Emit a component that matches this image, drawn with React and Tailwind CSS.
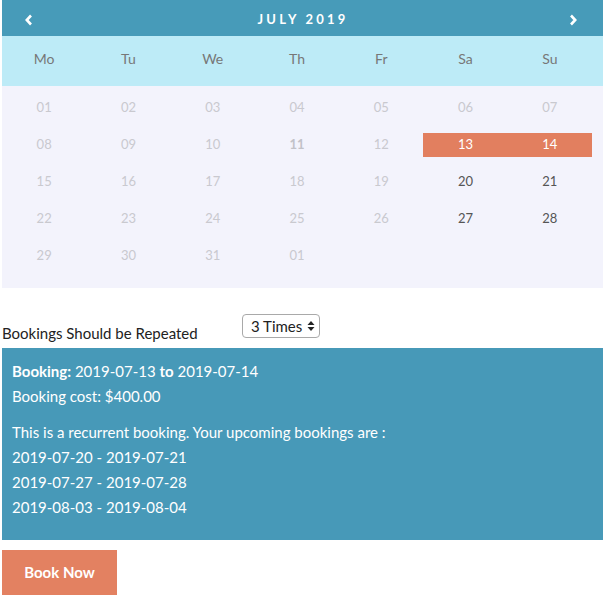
import React from "react";

const weekdays = ["Mo", "Tu", "We", "Th", "Fr", "Sa", "Su"];

// each row: [label, kind]
const rows = [
  [["01"], ["02"], ["03"], ["04"], ["05"], ["06"], ["07"]],
  [["08"], ["09"], ["10"], ["11", "today"], ["12"], ["13", "sel"], ["14", "sel"]],
  [["15"], ["16"], ["17"], ["18"], ["19"], ["20", "on"], ["21", "on"]],
  [["22"], ["23"], ["24"], ["25"], ["26"], ["27", "on"], ["28", "on"]],
  [["29"], ["30"], ["31"], ["01"], [""], [""], [""]],
];

const upcoming = [
  "2019-07-20 - 2019-07-21",
  "2019-07-27 - 2019-07-28",
  "2019-08-03 - 2019-08-04",
];

function DayCell({ label, kind }) {
  let cls = "text-[#c9c9cf]";
  if (kind === "today") cls = "text-[#c2c2c8] font-bold";
  if (kind === "on") cls = "text-[#555]";
  if (kind === "sel") cls = "text-white bg-[#e27f5f]";
  return (
    <div className={"h-[24px] flex items-center justify-center text-[13px] " + cls}>
      {label}
    </div>
  );
}

export default function App() {
  return (
    <div className="w-[605px] h-[598px] bg-white" style={{ fontFamily: "Lato, 'Open Sans', sans-serif" }}>
      <div className="pt-0 pl-[2px] pr-[2px]">
        {/* calendar */}
        <div>
          <div className="h-[36px] bg-[#479bb9] flex items-center justify-between pl-[22px] pr-[25px] pt-[3px] text-white">
            <svg width="10" height="12" viewBox="0 0 10 12">
              <path d="M7 1.5 L2.8 6 L7 10.5" stroke="white" strokeWidth="2.6" fill="none" />
            </svg>
            <span className="text-[13px] font-bold tracking-[0.25em] pl-[4px]">JULY 2019</span>
            <svg width="10" height="12" viewBox="0 0 10 12">
              <path d="M3 1.5 L7.2 6 L3 10.5" stroke="white" strokeWidth="2.6" fill="none" />
            </svg>
          </div>
          <div className="h-[50px] bg-[#bdebf7] grid grid-cols-7 w-full pr-[11px] items-center">
            {weekdays.map((d) => (
              <div key={d} className="text-center text-[14px] text-[#777] pb-[6px]">
                {d}
              </div>
            ))}
          </div>
          <div className="bg-[#f3f3fc] pr-[11px] pt-[10px] pb-[20px] flex flex-col gap-[13px]">
            {rows.map((r, i) => (
              <div key={i} className="grid grid-cols-7">
                {r.map(([label, kind], j) => (
                  <DayCell key={j} label={label} kind={kind} />
                ))}
              </div>
            ))}
          </div>
        </div>

        {/* repeat select */}
        <div className="flex items-start h-[60px] pt-[26px]">
          <span className="text-[15px] text-[#222] mt-[8px] w-[240px]">Bookings Should be Repeated</span>
          <div className="h-[24px] border border-[#a9a9a9] rounded-[4px] flex items-center pl-[8px] pr-[4px] gap-[5px] text-[15px] text-[#222]">
            3 Times
            <svg width="8" height="12" viewBox="0 0 8 12">
              <path d="M4 1 L7.5 5 H0.5 Z" fill="#222" />
              <path d="M4 11 L7.5 7 H0.5 Z" fill="#222" />
            </svg>
          </div>
        </div>

        {/* summary */}
        <div className="bg-[#4799b8] h-[192px] px-[10px] pt-[11px] text-white text-[15px] leading-[25px]">
          <div>
            <b>Booking:</b> 2019-07-13 <b>to</b> 2019-07-14
          </div>
          <div>Booking cost: $400.00</div>
          <div className="mt-[11px]">This is a recurrent booking. Your upcoming bookings are :</div>
          {upcoming.map((u) => (
            <div key={u}>{u}</div>
          ))}
        </div>

        <button className="mt-[10px] w-[115px] h-[45px] bg-[#e38161] text-white font-bold text-[15px]">
          Book Now
        </button>
      </div>
    </div>
  );
}
